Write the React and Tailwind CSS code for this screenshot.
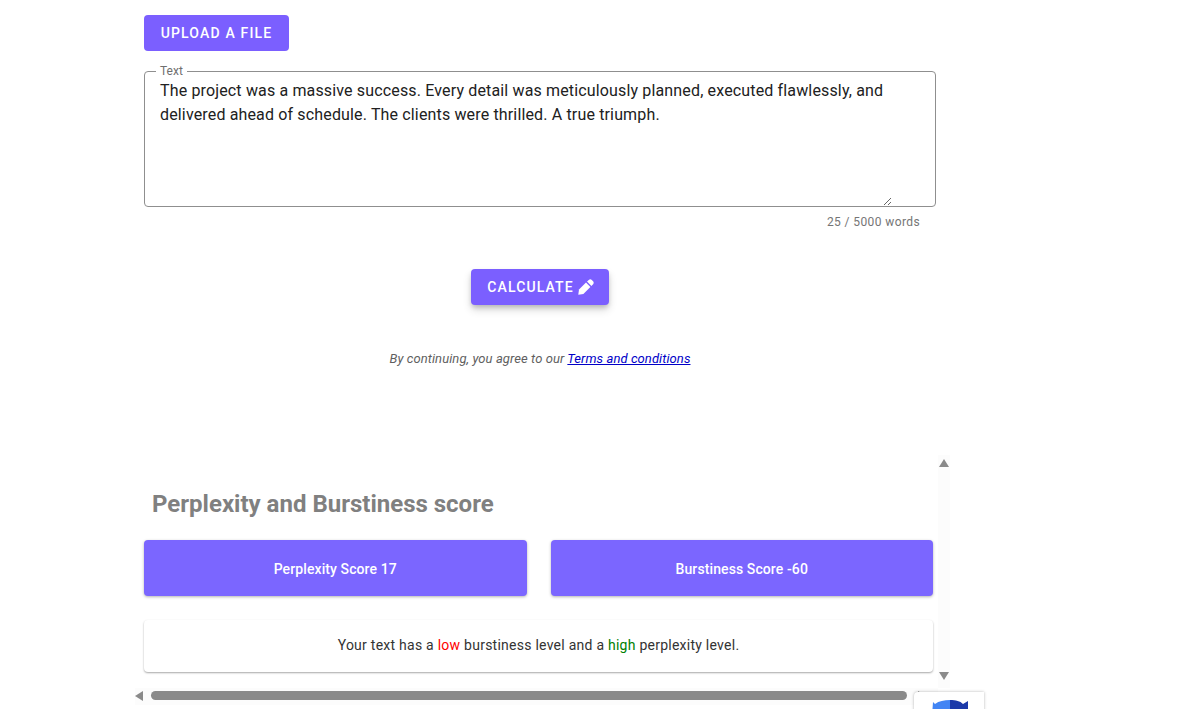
import React from "react";

const Arrow = ({ d, className }) => (
  <svg viewBox="0 0 10 8" className={className}><path d={d} fill="#8a8a8a" /></svg>
);

export default function App() {
  return (
    <div className="relative h-[709px] w-[1201px] overflow-hidden bg-white font-['Roboto',sans-serif] text-[#212121]">
      <div className="ml-[144px] w-[792px] pt-[15px]">
        <button className="h-9 w-[145px] rounded bg-[#7b5fff] text-sm font-medium tracking-[1.17px] text-white">UPLOAD A FILE</button>

        <div className="relative mt-5 h-[136px] rounded border border-[#8f8f8f]">
          <span className="absolute left-[11px] top-[-7px] bg-white px-[4px] text-xs leading-[13px] text-[#6f6f6f]">Text</span>
          <textarea
            readOnly
            className="block h-[134px] w-[747px] resize-y bg-transparent pl-[15px] pr-0 pt-[7px] text-base leading-6 tracking-[0.15px] text-[#212121] outline-none"
            value="The project was a massive success. Every detail was meticulously planned, executed flawlessly, and delivered ahead of schedule. The clients were thrilled. A true triumph."
          />
        </div>
        <p className="mt-[7px] pr-4 text-right text-xs leading-[16px] tracking-[0.4px] text-[#757575]">25 / 5000 words</p>

        <div className="mt-[39px] flex justify-center">
          <button className="flex h-9 w-[138px] items-center justify-center gap-[4px] rounded bg-[#7b5fff] pl-[1px] text-sm font-medium tracking-[1.1px] text-white shadow-[0_3px_5px_-1px_rgba(0,0,0,0.2),0_5px_8px_0_rgba(0,0,0,0.14)]">
            CALCULATE
            <svg viewBox="0 0 16 16" className="h-4 w-4" fill="white">
              <path d="M0.3 15.7 1 10.6 8 3.6l4.4 4.4-7 7z" />
              <path d="M9 2.6 10.8 0.9c.8-.8 2.2-.8 3 0l1.3 1.3c.8.8.8 2.2 0 3L13.4 7z" />
            </svg>
          </button>
        </div>

        <p className="mt-[46px] text-center text-[13px] italic leading-[16px] tracking-[0.08px] text-[#5f5f5f]">
          By continuing, you agree to our <a href="#terms" className="text-[#0000c8] underline">Terms and conditions</a>
        </p>
      </div>

      <div className="ml-[135px] mt-[88px] grid h-[250px] w-[815px] grid-cols-[803px_12px] grid-rows-[233px_17px]">
        <div className="overflow-hidden pl-[9px] pr-[5px] pt-[33px]">
          <h2 className="pl-2 text-2xl font-bold leading-8 text-[#808080]">Perplexity and Burstiness score</h2>
          <div className="mt-[20px] grid grid-cols-2 gap-6">
            <div className="flex h-14 items-center justify-center rounded bg-[#7b66ff] pt-[1px] text-sm font-medium tracking-[0.1px] text-white shadow-[0_1px_3px_rgba(0,0,0,0.3)]">Perplexity Score 17</div>
            <div className="flex h-14 items-center justify-center rounded bg-[#7b66ff] pt-[1px] text-sm font-medium tracking-[0.1px] text-white shadow-[0_1px_3px_rgba(0,0,0,0.3)]">Burstiness Score -60</div>
          </div>
          <div className="mt-6 flex h-[52px] items-center justify-center rounded bg-white pb-[2px] text-sm tracking-[0.25px] text-[#333333] shadow-[0_1px_2px_rgba(0,0,0,0.35)]">
            <span>Your text has a <span className="text-[#ff0000]">low</span> burstiness level and a <span className="text-[#008000]">high</span> perplexity level.</span>
          </div>
        </div>
        <div className="flex flex-col items-center justify-between bg-[#fcfcfc] pb-[8px] pt-[4px]">
          <Arrow d="M5 0 10 8H0z" className="h-2 w-[10px]" />
          <Arrow d="M0 0H10L5 8z" className="h-2 w-[10px]" />
        </div>
        <div className="flex items-center bg-[#fcfcfc] pb-[2px]">
          <svg viewBox="0 0 8 10" className="h-[10px] w-2"><path d="M8 0V10L0 5z" fill="#8a8a8a" /></svg>
          <div className="ml-2 h-[9px] w-[756px] rounded-full bg-[#8a8a8a]" />
          <svg viewBox="0 0 8 10" className="ml-[11px] h-[10px] w-2"><path d="M0 0V10L8 5z" fill="#8a8a8a" /></svg>
        </div>
        <div />
      </div>

      <div className="absolute left-[914px] top-[692px] h-[60px] w-[70px] rounded-tl-sm bg-white shadow-[0_0_3px_rgba(0,0,0,0.3)]">
        <svg viewBox="0 0 70 17" className="h-[17px] w-[70px]">
          <path d="M36 8C30 8 25 9 21 12l-2-2-.5 7H36z" fill="#4285f4" />
          <path d="M36 8c6 0 10 1 13 4l5-3v8H36z" fill="#1c3aa9" />
        </svg>
      </div>
    </div>
  );
}
